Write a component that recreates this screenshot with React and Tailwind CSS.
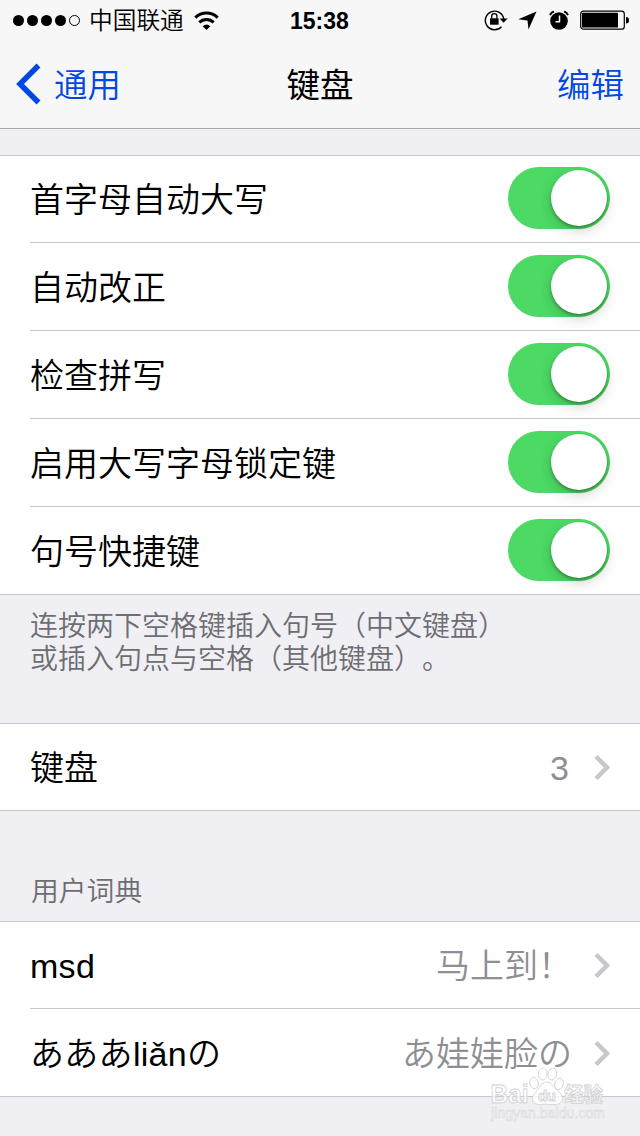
const switches = ['首字母自动大写', '自动改正', '检查拼写', '启用大写字母锁定键', '句号快捷键']

const dictionary = [
  { shortcut: 'msd', phrase: '马上到！' },
  { shortcut: 'あああliǎnの', phrase: 'あ娃娃脸の' },
]

function StatusBar() {
  return (
    <div className="flex h-10 items-center pl-[13px] pr-[10px]">
      <div className="flex w-[277px] items-center">
        <svg width="68" height="12" viewBox="0 0 68 12">
          {[5.5, 19.5, 33.5, 47.5].map((x) => (
            <circle key={x} cx={x} cy="6.5" r="5.5" />
          ))}
          <circle cx="61.5" cy="6.5" r="5" fill="none" stroke="#000" />
        </svg>
        <span className="ml-[8px] pt-[2px] text-[23.7px] leading-[38px] font-[350]">中国联通</span>
        <svg className="ml-[10px]" width="25" height="19" viewBox="0 0 25 19" fill="none" stroke="#000" strokeWidth="3">
          <path d="M1.3 6.6C7.5 .4 17.5 .4 23.7 6.6" />
          <path d="M5.3 11.3C9.4 7.4 15.6 7.4 19.7 11.3" />
          <path d="M12.5 19L8.7 15.2Q12.5 12 16.3 15.2Z" fill="#000" stroke="none" />
        </svg>
      </div>
      <span className="pt-[2px] text-[23px] leading-[38px] font-bold">15:38</span>
      <div className="ml-auto flex items-center">
        <svg width="24" height="22" viewBox="0 0 24 22">
          <path d="M17.5 17.7A9.3 9.3 0 1 1 19.8 10" fill="none" stroke="#000" strokeWidth="1.4" />
          <path d="M15.6 9.6H23.6L19.6 13.8Z" />
          <rect x="6" y="9.3" width="8.6" height="6.4" />
          <path d="M7.7 9.5V7.3A2.6 2.6 0 0 1 12.9 7.3V9.5" fill="none" stroke="#000" strokeWidth="1.3" />
        </svg>
        <svg className="ml-[10px]" width="19" height="19" viewBox="0 0 19 19">
          <path d="M18.5 .5L.3 8.3L9.5 9.5L10.5 18.5Z" />
        </svg>
        <svg className="ml-[12px]" width="20" height="20" viewBox="0 0 20 20">
          <circle cx="10" cy="11" r="8.8" />
          <path d="M1.1 5.3A5 5 0 0 1 5 1.6M15 1.6A5 5 0 0 1 18.9 5.3" fill="none" stroke="#000" strokeWidth="1.8" />
          <path d="M10.5 5.5V11.8H6.5" fill="none" stroke="#f7f7f7" strokeWidth="1.5" />
        </svg>
        <svg className="ml-[11px]" width="50" height="20" viewBox="0 0 50 20">
          <rect x=".7" y="1.2" width="43.6" height="18" rx="2.8" fill="none" stroke="#000" strokeWidth="1.2" />
          <rect x="2" y="2.8" width="36" height="14.8" rx=".6" />
          <path d="M46 7Q49 7 49 10.3T46 13.6Z" />
        </svg>
      </div>
    </div>
  )
}

function NavBar() {
  return (
    <div className="grid h-[88px] grid-cols-3 items-center px-[16px] text-[33.5px] leading-[84px]">
      <div className="flex items-center text-[#0047e3]">
        <svg width="26" height="42" viewBox="0 0 26 42">
          <path d="M22.5 2.5L4 21L22.5 39.5" fill="none" stroke="currentColor" strokeWidth="5.5" />
        </svg>
        <span className="ml-[12px] pt-1 font-[350]">通用</span>
      </div>
      <h1 className="pt-1 text-center font-normal">键盘</h1>
      <span className="pt-1 text-right font-[350] text-[#0047e3]">编辑</span>
    </div>
  )
}

function Section({ children }) {
  return <div className="border-y border-[#c8c7cc] bg-white pl-[30px]">{children}</div>
}

function Row({ label, children }) {
  return (
    <div className="flex h-[88px] items-end border-t border-[#c8c7cc] pr-[30px] text-[34px] leading-[84px] first:h-[86px] first:border-t-0">
      <span className="flex-1 font-[350]">{label}</span>
      {children}
    </div>
  )
}

function Toggle() {
  return (
    <div className="mb-[13px] flex h-[62px] w-[102px] justify-end rounded-full bg-[#4cd964] p-[3px]">
      <div className="size-14 rounded-full bg-white shadow-[0_5px_14px_rgba(0,0,0,0.16),0_2px_3px_rgba(0,0,0,0.3)]" />
    </div>
  )
}

function Detail({ value }) {
  return (
    <>
      <span className="font-[350] text-[#8e8e93]">{value}</span>
      <svg className="mb-[29px]" width="17" height="27" viewBox="0 0 17 27">
        <path d="M3 2.5L14 13.5L3 24.5" fill="none" stroke="#c7c7cc" strokeWidth="4.5" />
      </svg>
    </>
  )
}

function Watermark() {
  return (
    <svg
      className="absolute top-[1064px] left-[488px] font-['Liberation_Sans','Noto_Sans_CJK_SC',sans-serif]"
      width="122"
      height="60"
      viewBox="0 0 122 60"
      fill="#fff"
      fillOpacity=".75"
      stroke="#d2d2d6"
      strokeWidth=".9"
    >
      <text x="2.5" y="38.5" fontSize="26" fontWeight="700" textLength="38" lengthAdjust="spacingAndGlyphs">Bai</text>
      <ellipse cx="46" cy="19" rx="4.2" ry="5.8" transform="rotate(-15 46 19)" />
      <ellipse cx="54.7" cy="10" rx="4.3" ry="6" />
      <ellipse cx="64.3" cy="10" rx="4.3" ry="6" transform="rotate(12 64.3 10)" />
      <ellipse cx="71" cy="20" rx="4.2" ry="5.8" transform="rotate(20 71 20)" />
      <path d="M58.5 18C64 18 66 24 71 28C77 33 75 40 68 40.500C63 41 57 39.5 52 40.5C44 41 42 34 47 29C51 25 53 18 58.5 18Z" />
      <text x="50" y="37" fontSize="15" fontWeight="700" textLength="18">du</text>
      <text x="76" y="37.5" fontSize="20" fontWeight="700" textLength="39" lengthAdjust="spacingAndGlyphs">经验</text>
      <text x="3" y="53.5" fontSize="14" strokeWidth=".5" textLength="114">jingyan.baidu.com</text>
    </svg>
  )
}

export default function App() {
  return (
    <div className="relative h-[1136px] w-[640px] overflow-hidden bg-[#efeff4] font-['Liberation_Sans','Noto_Sans_CJK_SC',sans-serif] text-black [text-spacing-trim:space-all]">
      <header className="border-b border-[#a7a7ac] bg-[#f7f7f7]">
        <StatusBar />
        <NavBar />
      </header>

      <main className="pt-[26px]">
        <Section>
          {switches.map((label) => (
            <Row key={label} label={label}>
              <Toggle />
            </Row>
          ))}
        </Section>
        <p className="h-32 pt-[15px] pl-[30px] text-[28px] leading-[33px] font-[350] text-[#6d6d72]">
          连按两下空格键插入句号（中文键盘）
          <br />
          或插入句点与空格（其他键盘）。
        </p>

        <Section>
          <Row label="键盘">
            <div className="flex items-end gap-[24px]">
              <Detail value="3" />
            </div>
          </Row>
        </Section>
        <h2 className="h-[110px] pt-[61px] pl-[31px] text-[27.8px] leading-10 font-[350] text-[#6d6d72]">用户词典</h2>

        <Section>
          {dictionary.map(({ shortcut, phrase }) => (
            <Row key={shortcut} label={<span className="tracking-[0.3px]">{shortcut}</span>}>
              <div className="flex items-end gap-[21px]">
                <Detail value={phrase} />
              </div>
            </Row>
          ))}
        </Section>
      </main>
      <Watermark />
    </div>
  )
}
